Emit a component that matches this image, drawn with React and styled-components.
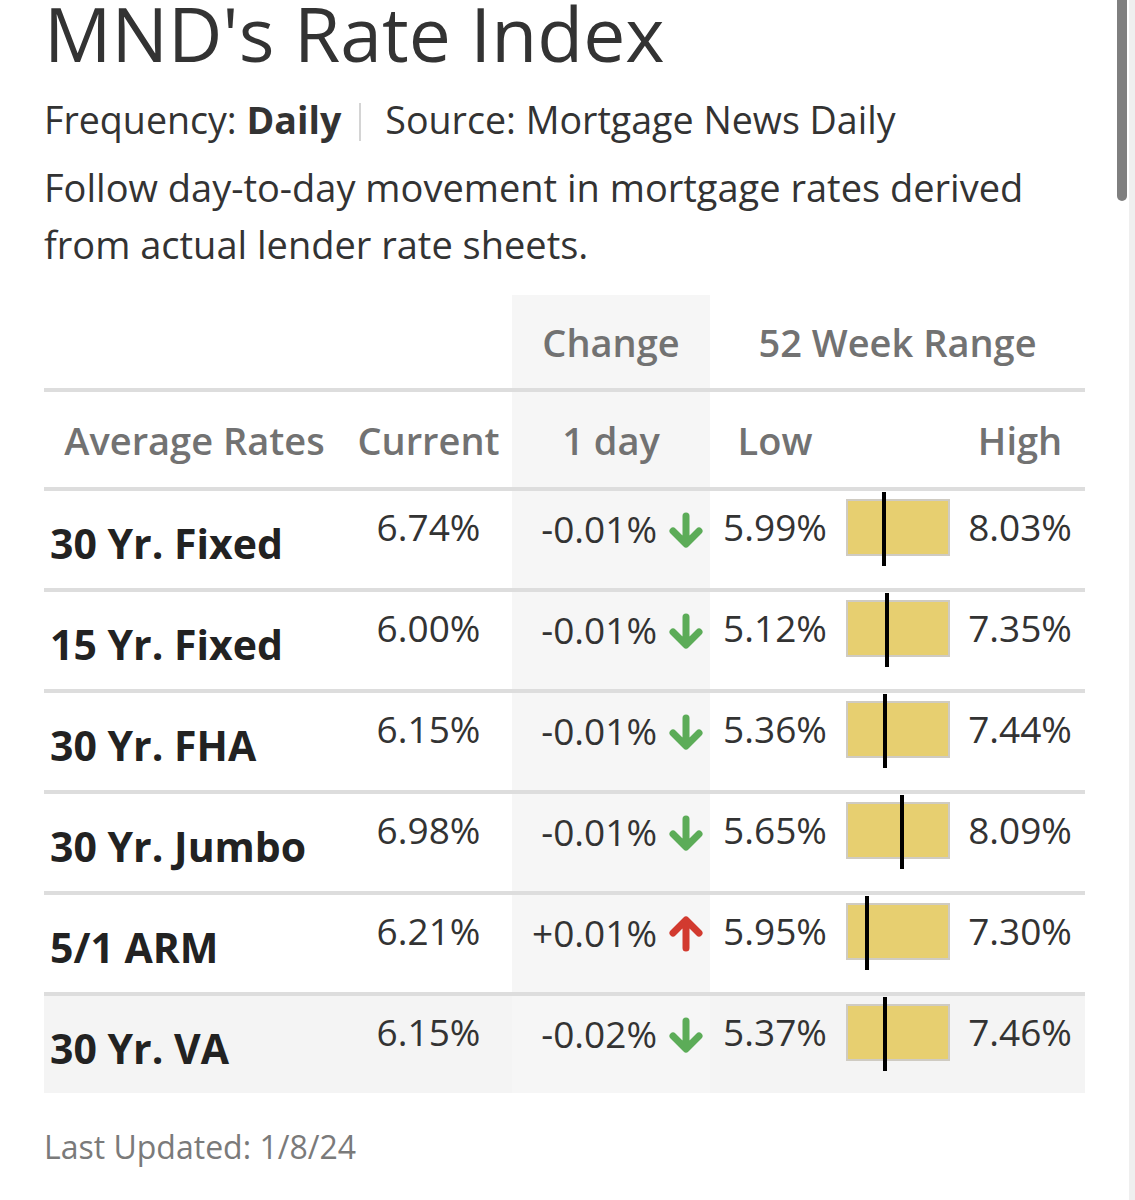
import styled, { createGlobalStyle } from "styled-components";

const GlobalStyle = createGlobalStyle`
  * { box-sizing: border-box; }
  body {
    margin: 0;
    background: #ffffff;
    font-family: "Open Sans", "Noto Sans", sans-serif;
    color: #333333;
  }
`;

const Page = styled.div`
  padding: 0 0 0 44px;
  width: 1135px;
`;

const Title = styled.h1`
  margin: 0;
  font-size: 75px;
  line-height: 66px;
  font-weight: 400;
  color: #333333;
`;

const Meta = styled.div`
  margin-top: 30px;
  font-size: 37.6px;
  line-height: 48px;
  color: #333333;
  white-space: nowrap;
  b { font-weight: 700; }
`;

const Divider = styled.span`
  display: inline-block;
  width: 2px;
  height: 38px;
  background: #d4d4d4;
  margin: 0 24px 0 18px;
  vertical-align: -7px;
`;

const Intro = styled.p`
  margin: 15px 0 0 0;
  font-size: 38px;
  line-height: 57px;
  color: #333333;
  width: 1000px;
`;

const Table = styled.table`
  margin-top: 22px;
  width: 1041px;
  table-layout: fixed;
  border-collapse: separate;
  border-spacing: 0;
`;

const Row = styled.tr`
  background: ${(p) => (p.$shade ? "#f4f4f4" : "transparent")};
`;

const Cell = styled.td`
  padding: 0;
  text-align: center;
  height: ${(p) => (p.$top ? "93px" : p.$head ? "99px" : "101px")};
  border-top: ${(p) => (p.$top ? "none" : "4px solid #dddddd")};
  background: ${(p) => (p.$grey ? "#f6f6f6" : "transparent")};
`;

const HeadCell = styled(Cell)`
  vertical-align: middle;
  font-size: 38px;
  font-weight: 600;
  color: #727272;
`;

const LabelCell = styled(Cell)`
  vertical-align: middle;
  text-align: left;
  padding: 7px 0 0 6px;
  font-size: 41px;
  line-height: 41px;
  font-weight: 700;
  color: #222222;
  white-space: nowrap;
`;

const ValueCell = styled(Cell)`
  vertical-align: top;
  padding-top: 17px;
  font-size: 37px;
  line-height: 37px;
  color: #333333;
  text-align: ${(p) => (p.$right ? "right" : "center")};
  padding-right: ${(p) => (p.$right ? "6px" : "0")};
`;

const BarCell = styled(Cell)`
  vertical-align: top;
  padding-top: 8px;
`;

const ChangeWrap = styled.span`
  display: inline-flex;
  align-items: center;
  gap: 11px;
  svg { margin-top: 4px; }
`;

const RangeBox = styled.div`
  position: relative;
  width: 104px;
  height: 57px;
  margin: 0 auto;
  background: #e7cf70;
  border: 2px solid #cfcbc2;
`;

const Marker = styled.div`
  position: absolute;
  top: -9px;
  width: 4px;
  height: 74px;
  margin-left: -2px;
  background: #000000;
`;

const Updated = styled.div`
  margin-top: 31px;
  font-size: 32px;
  line-height: 46px;
  color: #7a7a7a;
`;

const ScrollTrack = styled.div`
  position: fixed;
  top: 0;
  right: 0;
  width: 6px;
  height: 100%;
  background: #efefef;
`;

const ScrollThumb = styled.div`
  position: fixed;
  top: 0;
  right: 8px;
  width: 10px;
  height: 201px;
  background: #7f7f7f;
  border-radius: 0 0 5px 5px;
`;

const Arrow = ({ up }) => (
  <svg width="36" height="36" viewBox="0 0 36 36" fill="none">
    {up ? (
      <path
        d="M18 32V5M5 17L18 4L31 17"
        stroke="#d23a2f"
        strokeWidth="7"
        strokeLinecap="round"
        strokeLinejoin="round"
      />
    ) : (
      <path
        d="M18 4V31M5 19L18 32L31 19"
        stroke="#5cac58"
        strokeWidth="7"
        strokeLinecap="round"
        strokeLinejoin="round"
      />
    )}
  </svg>
);

const rates = [
  { name: "30 Yr. Fixed", current: 6.74, change: "-0.01%", up: false, low: 5.99, high: 8.03 },
  { name: "15 Yr. Fixed", current: 6.0, change: "-0.01%", up: false, low: 5.12, high: 7.35 },
  { name: "30 Yr. FHA", current: 6.15, change: "-0.01%", up: false, low: 5.36, high: 7.44 },
  { name: "30 Yr. Jumbo", current: 6.98, change: "-0.01%", up: false, low: 5.65, high: 8.09 },
  { name: "5/1 ARM", current: 6.21, change: "+0.01%", up: true, low: 5.95, high: 7.3 },
  { name: "30 Yr. VA", current: 6.15, change: "-0.02%", up: false, low: 5.37, high: 7.46 },
];

const pct = (v) => `${v.toFixed(2)}%`;

export default function App() {
  return (
    <>
      <GlobalStyle />
      <ScrollTrack />
      <ScrollThumb />
      <Page>
        <Title>MND's Rate Index</Title>
        <Meta>
          Frequency: <b>Daily</b>
          <Divider />
          Source: Mortgage News Daily
        </Meta>
        <Intro>
          Follow day-to-day movement in mortgage rates derived from actual lender rate sheets.
        </Intro>
        <Table>
          <colgroup>
            <col style={{ width: 301 }} />
            <col style={{ width: 167 }} />
            <col style={{ width: 198 }} />
            <col style={{ width: 130 }} />
            <col style={{ width: 115 }} />
            <col style={{ width: 130 }} />
          </colgroup>
          <tbody>
            <Row>
              <HeadCell $top colSpan={2} />
              <HeadCell $top $grey>Change</HeadCell>
              <HeadCell $top colSpan={3}>52 Week Range</HeadCell>
            </Row>
            <Row>
              <HeadCell $head>Average Rates</HeadCell>
              <HeadCell $head>Current</HeadCell>
              <HeadCell $head $grey>1 day</HeadCell>
              <HeadCell $head>Low</HeadCell>
              <HeadCell $head />
              <HeadCell $head>High</HeadCell>
            </Row>
            {rates.map((r, i) => {
              const pos = ((r.current - r.low) / (r.high - r.low)) * 100;
              return (
                <Row key={r.name} $shade={i === rates.length - 1}>
                  <LabelCell>{r.name}</LabelCell>
                  <ValueCell>{pct(r.current)}</ValueCell>
                  <ValueCell $grey $right>
                    <ChangeWrap>
                      {r.change}
                      <Arrow up={r.up} />
                    </ChangeWrap>
                  </ValueCell>
                  <ValueCell>{pct(r.low)}</ValueCell>
                  <BarCell>
                    <RangeBox>
                      <Marker style={{ left: `${pos}%` }} />
                    </RangeBox>
                  </BarCell>
                  <ValueCell>{pct(r.high)}</ValueCell>
                </Row>
              );
            })}
          </tbody>
        </Table>
        <Updated>Last Updated: 1/8/24</Updated>
      </Page>
    </>
  );
}
